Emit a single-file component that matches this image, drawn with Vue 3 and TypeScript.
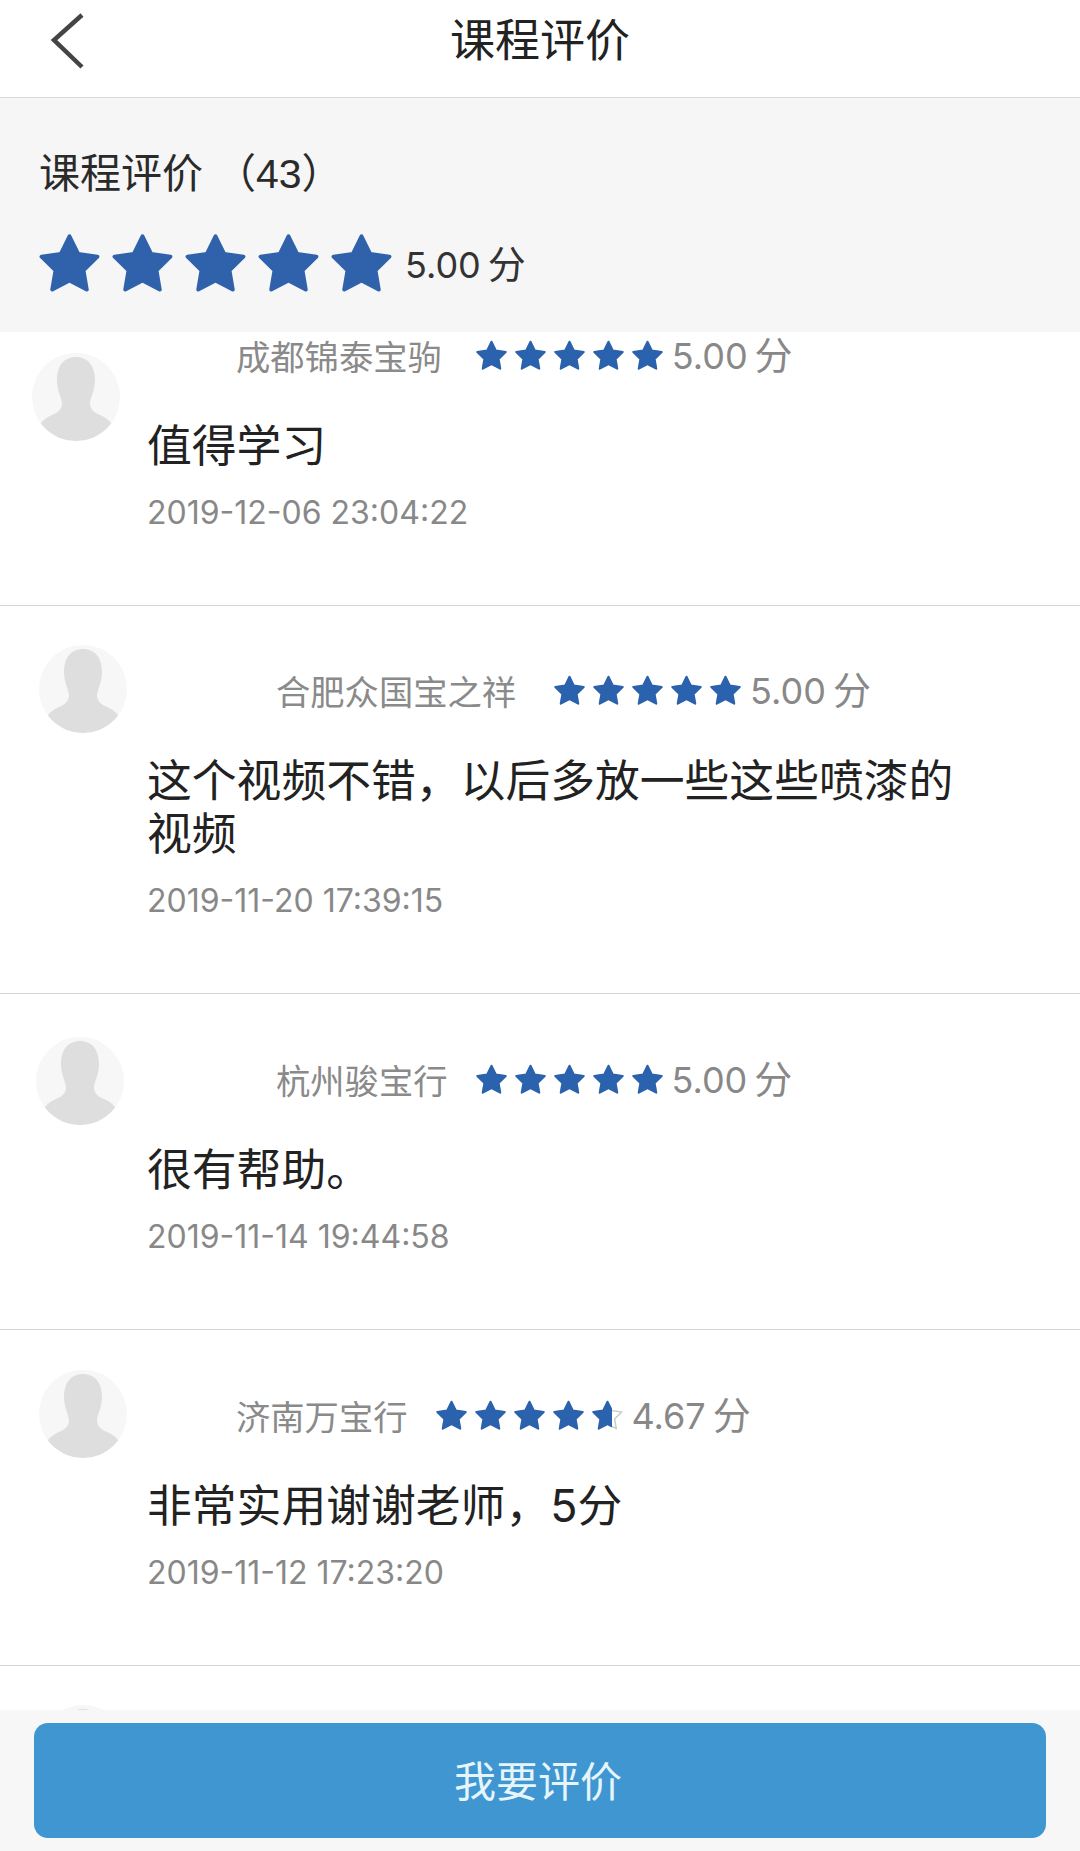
<script setup lang="ts">
interface Review {
  name?: string
  rating?: number
  score?: string
  body?: string
  date?: string
  avatarTop: number
  avatarLeft: number
  headTop?: number
  nameLeft?: number
  starGap?: number
}

const starPoints = '12,2.6 15.06,8.79 21.89,9.79 16.95,14.61 18.11,21.41 12,18.2 5.89,21.41 7.05,14.61 2.11,9.79 8.94,8.79'

const reviews: Review[] = [
  { name: '成都锦泰宝驹', rating: 5, score: '5.00', body: '值得学习', date: '2019-12-06 23:04:22', avatarTop: 21, avatarLeft: 32, headTop: 1, nameLeft: 89, starGap: 34 },
  { name: '合肥众国宝之祥', rating: 5, score: '5.00', body: '这个视频不错，以后多放一些这些喷漆的视频', date: '2019-11-20 17:39:15', avatarTop: 39, avatarLeft: 39, headTop: 62, nameLeft: 129, starGap: 38 },
  { name: '杭州骏宝行', rating: 5, score: '5.00', body: '很有帮助。', date: '2019-11-14 19:44:58', avatarTop: 43, avatarLeft: 36, headTop: 63, nameLeft: 129, starGap: 28 },
  { name: '济南万宝行', rating: 4.67, score: '4.67', body: '非常实用谢谢老师，5分', date: '2019-11-12 17:23:20', avatarTop: 40, avatarLeft: 39, headTop: 63, nameLeft: 89, starGap: 28 },
  { avatarTop: 39, avatarLeft: 39 },
]

function starFill(rating: number, index: number) {
  return Math.max(0, Math.min(1, rating - index)) * 100 + '%'
}
</script>

<template>
  <div class="page">
    <header class="topbar">
      <svg class="back" viewBox="0 0 40 60" width="40" height="60">
        <path d="M33 3 L5 28 L33 55" fill="none" stroke="#444" stroke-width="4.5" />
      </svg>
      <h1>课程评价</h1>
    </header>

    <section class="summary">
      <div class="summary-title">课程评价<span class="count">（43）</span></div>
      <div class="summary-rating">
        <svg v-for="n in 5" :key="n" class="big-star" viewBox="1.2 1.4 21.6 21.6">
          <polygon :points="starPoints" fill="#2f62ab" stroke="#2f62ab" stroke-width="1.4" stroke-linejoin="round" />
        </svg>
        <span class="summary-score">5.00<span class="unit">分</span></span>
      </div>
    </section>

    <main class="list">
      <article v-for="(item, i) in reviews" :key="i" class="row">
        <svg
          class="avatar"
          viewBox="0 0 88 88"
          width="88"
          height="88"
          :style="{ marginTop: item.avatarTop + 'px', marginLeft: item.avatarLeft + 'px' }"
        >
          <defs>
            <clipPath :id="'round' + i"><circle cx="44" cy="44" r="44" /></clipPath>
          </defs>
          <g :clip-path="'url(#round' + i + ')'">
            <rect width="88" height="88" fill="#f7f7f8" />
            <path
              d="M44 4 C32 4 25 13 25 27 C25 37 29 43 30 50 C30 57 25 60 18 63 C14 65 11 67 9 70 L9 88 L79 88 L79 70 C77 67 74 65 70 63 C63 60 58 57 58 50 C59 43 63 37 63 27 C63 13 56 4 44 4 Z"
              fill="#dedede"
            />
          </g>
        </svg>

        <template v-if="item.name">
          <div class="head" :style="{ marginTop: item.headTop + 'px', marginLeft: item.nameLeft + 'px' }">
            <span class="name">{{ item.name }}</span>
            <div class="stars" :style="{ marginLeft: item.starGap + 'px' }">
              <span v-for="n in 5" :key="n" class="star">
                <svg viewBox="1.2 1.4 21.6 21.6" width="31" height="31">
                  <polygon :points="starPoints" fill="#fff" stroke="#c9c9c9" stroke-width="1" stroke-linejoin="round" />
                </svg>
                <span class="star-fill" :style="{ width: starFill(item.rating ?? 0, n - 1) }">
                  <svg viewBox="1.2 1.4 21.6 21.6" width="31" height="31">
                    <polygon :points="starPoints" fill="#2b62ae" stroke="#2b62ae" stroke-width="1.4" stroke-linejoin="round" />
                  </svg>
                </span>
              </span>
            </div>
            <span class="score">{{ item.score }}<span class="unit">分</span></span>
          </div>
          <p class="body">{{ item.body }}</p>
          <div class="date">{{ item.date }}</div>
        </template>
      </article>
    </main>

    <footer class="footer">
      <button class="submit">我要评价</button>
    </footer>
  </div>
</template>

<style scoped>
.page {
  display: flex;
  flex-direction: column;
  height: 1851px;
  overflow: hidden;
  background: #fff;
  font-family: "Liberation Sans", "Noto Sans CJK SC", sans-serif;
}

.topbar {
  position: relative;
  flex: none;
  height: 97px;
  display: flex;
  align-items: center;
  justify-content: center;
  border-bottom: 1px solid #d9d9d9;
}

.topbar h1 {
  margin: 0 0 22px;
  font-size: 45px;
  font-weight: 400;
  color: #222;
}

.back {
  position: absolute;
  left: 49px;
  top: 12px;
}

.summary {
  flex: none;
  height: 234px;
  box-sizing: border-box;
  padding: 48px 0 0 39px;
  background: #f6f6f6;
}

.summary-title {
  height: 56px;
  line-height: 56px;
  font-size: 41px;
  color: #2a2a2a;
}

.count {
  margin-left: 12px;
}

.summary-rating {
  display: flex;
  align-items: center;
  gap: 12px;
  margin-top: 31px;
}

.big-star {
  width: 61px;
  height: 61px;
}

.summary-score {
  margin: 0 0 4px 1px;
  font-family: Inter, "Noto Sans CJK SC", sans-serif;
  font-size: 36px;
  color: #333;
}

.unit {
  margin-left: 7px;
  font-size: 38px;
}

.list {
  flex: 1;
  min-height: 0;
  overflow: hidden;
}

.row {
  display: grid;
  grid-template-columns: 147px 1fr;
  padding-bottom: 72px;
  border-bottom: 1px solid #d6d6d6;
}

.avatar {
  grid-column: 1;
  grid-row: 1 / span 3;
}

.head {
  grid-column: 2;
  display: flex;
  align-items: center;
  height: 44px;
}

.name {
  font-size: 34.3px;
  color: #8a8a8a;
}

.stars {
  display: flex;
  gap: 8px;
}

.star {
  position: relative;
  width: 31px;
  height: 31px;
}

.star svg {
  display: block;
}

.star-fill {
  position: absolute;
  left: 0;
  top: 0;
  height: 31px;
  overflow: hidden;
}

.score {
  margin: 0 0 5px 9px;
  font-family: Inter, "Noto Sans CJK SC", sans-serif;
  font-size: 36px;
  color: #888;
}

.body {
  grid-column: 2;
  margin: 43px 100px 0 0;
  font-family: Inter, "Noto Sans CJK SC", sans-serif;
  font-size: 44.8px;
  line-height: 53px;
  color: #222;
}

.date {
  grid-column: 2;
  margin-top: 20px;
  font-family: Inter, sans-serif;
  font-size: 32px;
  line-height: 40px;
  color: #888;
}

.footer {
  flex: none;
  height: 141px;
  box-sizing: border-box;
  padding: 13px 34px;
  background: #f7f7f7;
}

.submit {
  display: block;
  width: 100%;
  height: 115px;
  padding: 0 4px 4px 0;
  border: none;
  border-radius: 14px;
  background: #3f96d1;
  font-family: inherit;
  font-size: 42px;
  color: #e6f5fb;
}
</style>

<style>
html,
body {
  margin: 0;
  overflow: hidden;
}
</style>
